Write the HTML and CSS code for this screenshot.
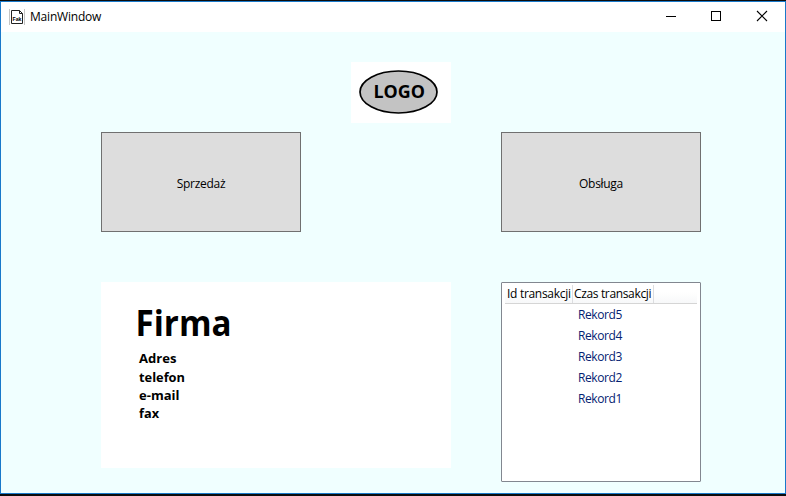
FILE: index.html
```html
<!DOCTYPE html>
<html lang="pl">
<head>
<meta charset="utf-8">
<title>MainWindow</title>
<link rel="stylesheet" href="styles.css">
</head>
<body>
<div class="window">
  <header class="titlebar">
    <svg class="app-icon" width="16" height="16" viewBox="0 0 16 16">
      <path d="M0.5 0v16M15.5 0v16" stroke="#c4c4c4"/>
      <path d="M2.5 1.5h8l3 3v10h-11z" fill="#fff" stroke="#222"/>
      <path d="M10.5 1.5v3h3" fill="none" stroke="#222"/>
      <text x="3.5" y="11.5" textLength="9" lengthAdjust="spacingAndGlyphs">Fak</text>
    </svg>
    <span class="title">MainWindow</span>
    <div class="controls">
      <svg width="46" height="30" viewBox="0 0 46 30"><path d="M19 14.5h10" stroke="#000" shape-rendering="crispEdges"/></svg>
      <svg width="46" height="30" viewBox="0 0 46 30"><path d="M18.5 9.500h9v9h-9z" fill="none" stroke="#000" shape-rendering="crispEdges"/></svg>
      <svg width="46" height="30" viewBox="0 0 46 30"><path d="M18 9l10 10M28 9l-10 10" fill="none" stroke="#000" stroke-width="1.1"/></svg>
    </div>
  </header>
  <main class="content">
    <svg class="logo" width="100" height="61" viewBox="0 0 100 61">
      <ellipse cx="47.500" cy="30" rx="38.500" ry="21" fill="#c3c3c3" stroke="#000" stroke-width="1.700"/>
      <text x="22.500" y="36" textLength="51.500" lengthAdjust="spacingAndGlyphs">LOGO</text>
    </svg>
    <button class="btn sale"><span>Sprzedaż</span></button>
    <button class="btn service"><span>Obsługa</span></button>
    <section class="company">
      <svg width="350" height="186" viewBox="0 0 350 186">
        <text class="name" x="34.500" y="54" textLength="96" lengthAdjust="spacingAndGlyphs">Firma</text>
        <text x="38" y="81" textLength="37.500" lengthAdjust="spacingAndGlyphs">Adres</text>
        <text x="38" y="99.500" textLength="46" lengthAdjust="spacingAndGlyphs">telefon</text>
        <text x="38" y="118" textLength="40.500" lengthAdjust="spacingAndGlyphs">e-mail</text>
        <text x="38" y="136" textLength="20" lengthAdjust="spacingAndGlyphs">fax</text>
      </svg>
    </section>
    <section class="list">
      <div class="list-head"><span class="col-id">Id transakcji</span><span class="col-time">Czas transakcji</span></div>
      <div class="row">Rekord5</div>
      <div class="row">Rekord4</div>
      <div class="row">Rekord3</div>
      <div class="row">Rekord2</div>
      <div class="row">Rekord1</div>
    </section>
  </main>
</div>
</body>
</html>
```
FILE: styles.css
```css
* { box-sizing: border-box; }
body {
  margin: 0;
  padding: 1px 0 2px;
  height: 496px;
  background: #0c0c0c;
  overflow: hidden;
  font: 12px/16px "Open Sans", "Noto Sans", sans-serif;
  color: #000;
}
.window {
  height: 493px;
  border: 1px solid #1979ca;
  background: #f0ffff;
}
.titlebar {
  display: flex;
  align-items: center;
  height: 30px;
  padding-left: 8px;
  background: #fff;
}
.app-icon text { font: bold 6px "Liberation Sans", sans-serif; }
.title { margin-left: 5px; letter-spacing: -0.2px; }
.controls { display: flex; margin-left: auto; }
.controls svg { display: block; }
.content {
  display: grid;
  grid-template-columns: 200px 50px 100px 50px 200px;
  grid-template-rows: 70px 100px 50px 200px;
  padding: 30px 0 0 100px;
}
.logo { grid-area: 1 / 3; background: #fff; }
.logo text { font: bold 18.5px "Open Sans", sans-serif; }
.btn {
  padding: 3px 0 0;
  border: 1px solid #707070;
  background: #ddd;
  font: inherit;
  color: #000;
  letter-spacing: -0.3px;
}
.sale { grid-area: 2 / 1; }
.service { grid-area: 2 / 5; }
.company { grid-area: 4 / 1 / 5 / 4; height: 186px; background: #fff; }
.company svg { display: block; }
.company text { font: bold 13px "Open Sans", sans-serif; }
.company .name { font-size: 36px; }
.list {
  grid-area: 4 / 5;
  padding: 2px 3px;
  border: 1px solid #828790;
  border-radius: 1px;
  background: #fff;
}
.list-head {
  display: flex;
  height: 19px;
  border-bottom: 1px solid #d5d5d5;
  background: linear-gradient(#fff 40%, #f7f8f9);
  white-space: nowrap;
}
.list-head span {
  border-right: 1px solid #dcdde0;
  padding: 1px 0 0 2px;
  letter-spacing: -0.3px;
}
.list-head .col-id { width: 68px; }
.list-head .col-time { width: 81px; padding-left: 1px; letter-spacing: -0.35px; }
.row {
  height: 21px;
  padding-left: 73px;
  line-height: 21px;
  letter-spacing: -0.4px;
  color: #042271;
}
```
